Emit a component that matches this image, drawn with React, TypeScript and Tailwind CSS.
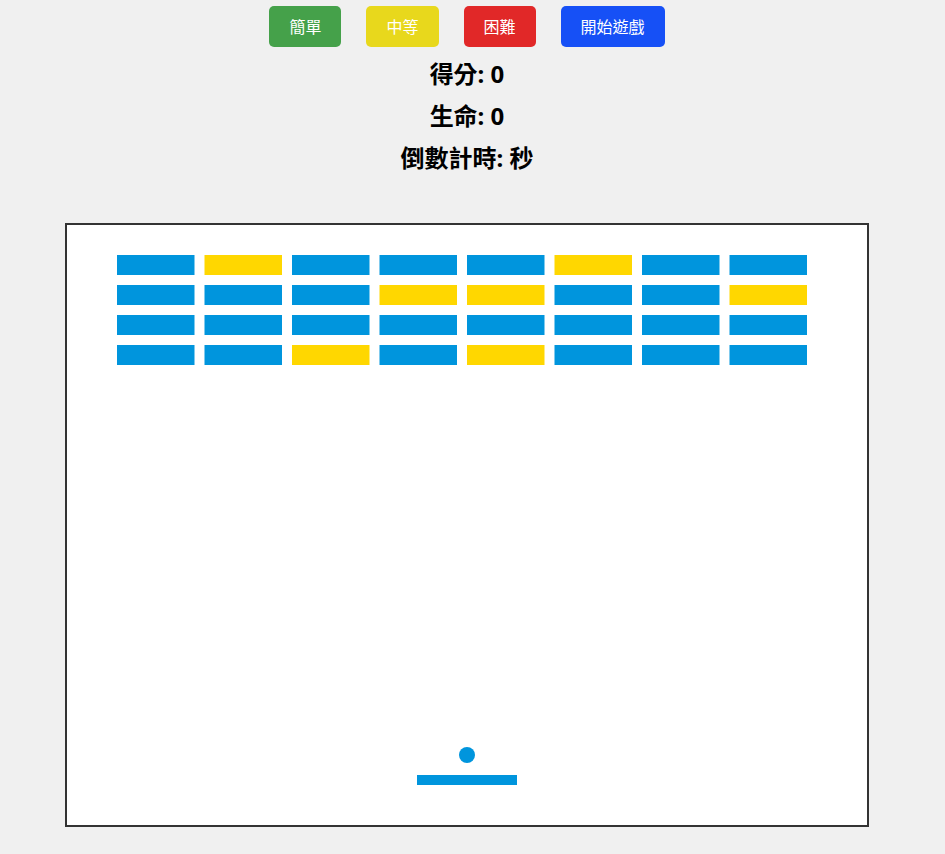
const BLUE = '#0095DD';
const GOLD = '#FFD700';

// brick layout: 1 = gold, 0 = blue
const rows = [
  [0, 1, 0, 0, 0, 1, 0, 0],
  [0, 0, 0, 1, 1, 0, 0, 1],
  [0, 0, 0, 0, 0, 0, 0, 0],
  [0, 0, 1, 0, 1, 0, 0, 0],
];

const brickW = 77.5;
const brickH = 20;
const pad = 10;
const offLeft = 50;
const offTop = 30;

const buttons = [
  { label: '簡單', cls: 'bg-[#45a14a]' },
  { label: '中等', cls: 'bg-[#e8d81c]' },
  { label: '困難', cls: 'bg-[#e12828]' },
  { label: '開始遊戲', cls: 'bg-[#1650f6]' },
];

export default function App() {
  return (
    <div
      className="min-h-screen w-full bg-[#f0f0f0] pr-[11px] text-black"
      style={{ fontFamily: '"Noto Sans", "Noto Sans CJK TC", sans-serif' }}
    >
      <div className="flex flex-col items-center">
        {/* difficulty + start */}
        <div className="mt-[6px] flex gap-[25px]">
          {buttons.map((b) => (
            <button
              key={b.label}
              className={`flex h-[41px] items-center justify-center rounded-[5px] px-5 text-[16px] text-white ${b.cls}`}
            >
              {b.label}
            </button>
          ))}
        </div>

        {/* stats */}
        <div className="mt-[6px] flex flex-col items-center text-[24px] font-bold">
          <div className="h-[42px] leading-[42px]">得分: 0</div>
          <div className="h-[42px] leading-[42px]">生命: 0</div>
          <div className="h-[42px] leading-[42px]">倒數計時: 秒</div>
        </div>

        {/* game board */}
        <div className="mt-[44px] border-2 border-[#333333] bg-white">
          <svg width="800" height="600" viewBox="0 0 800 600" className="block">
            {rows.map((row, r) =>
              row.map((c, i) => (
                <rect
                  key={`${r}-${i}`}
                  x={offLeft + i * (brickW + pad)}
                  y={offTop + r * (brickH + pad)}
                  width={brickW}
                  height={brickH}
                  fill={c ? GOLD : BLUE}
                />
              ))
            )}
            <circle cx="400" cy="530" r="8" fill={BLUE} />
            <rect x="350" y="550" width="100" height="10" fill={BLUE} />
          </svg>
        </div>
      </div>
    </div>
  );
}
